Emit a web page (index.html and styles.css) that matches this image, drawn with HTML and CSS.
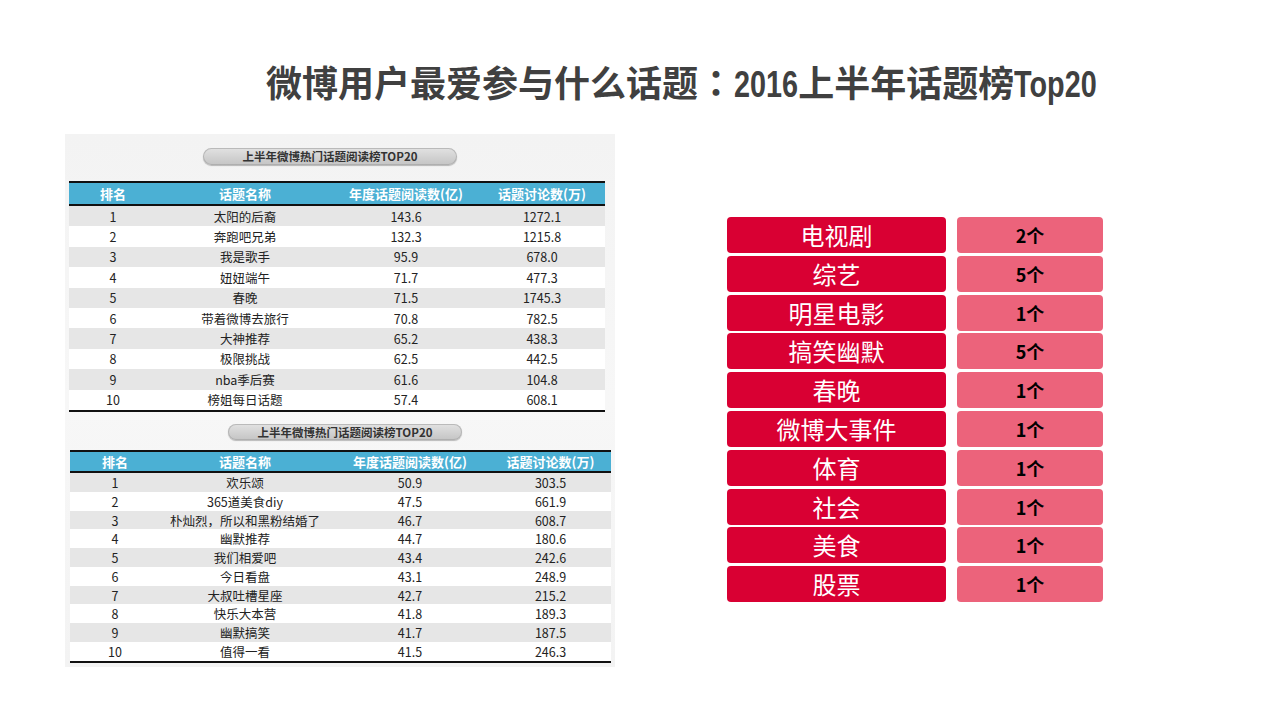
FILE: index.html
```html
<!DOCTYPE html>
<html lang="zh-CN">
<head>
<meta charset="utf-8">
<title>微博用户最爱参与什么话题</title>
<link rel="stylesheet" href="styles.css">
</head>
<body>
<h1 class="title">微博用户最爱参与什么话题<span class="colon" lang="zh-TW">：</span><span class="lat year">2016</span>上半年话题榜<span class="lat top">Top20</span></h1>
<main class="content">
  <section class="panel">
    <div class="block block-a">
      <div class="pill">上半年微博热门话题阅读榜TOP20</div>
      <div class="grid">
        <div class="row head"><span>排名</span><span>话题名称</span><span>年度话题阅读数(亿)</span><span>话题讨论数(万)</span></div>
        <div class="row"><span>1</span><span>太阳的后裔</span><span>143.6</span><span>1272.1</span></div>
        <div class="row"><span>2</span><span>奔跑吧兄弟</span><span>132.3</span><span>1215.8</span></div>
        <div class="row"><span>3</span><span>我是歌手</span><span>95.9</span><span>678.0</span></div>
        <div class="row"><span>4</span><span>妞妞端午</span><span>71.7</span><span>477.3</span></div>
        <div class="row"><span>5</span><span>春晚</span><span>71.5</span><span>1745.3</span></div>
        <div class="row"><span>6</span><span>带着微博去旅行</span><span>70.8</span><span>782.5</span></div>
        <div class="row"><span>7</span><span>大神推荐</span><span>65.2</span><span>438.3</span></div>
        <div class="row"><span>8</span><span>极限挑战</span><span>62.5</span><span>442.5</span></div>
        <div class="row"><span>9</span><span>nba季后赛</span><span>61.6</span><span>104.8</span></div>
        <div class="row last"><span>10</span><span>榜姐每日话题</span><span>57.4</span><span>608.1</span></div>
      </div>
    </div>
    <div class="block block-b">
      <div class="pill">上半年微博热门话题阅读榜TOP20</div>
      <div class="grid">
        <div class="row head"><span>排名</span><span>话题名称</span><span>年度话题阅读数(亿)</span><span>话题讨论数(万)</span></div>
        <div class="row"><span>1</span><span>欢乐颂</span><span>50.9</span><span>303.5</span></div>
        <div class="row"><span>2</span><span>365道美食diy</span><span>47.5</span><span>661.9</span></div>
        <div class="row"><span>3</span><span>朴灿烈，所以和黑粉结婚了</span><span>46.7</span><span>608.7</span></div>
        <div class="row"><span>4</span><span>幽默推荐</span><span>44.7</span><span>180.6</span></div>
        <div class="row"><span>5</span><span>我们相爱吧</span><span>43.4</span><span>242.6</span></div>
        <div class="row"><span>6</span><span>今日看盘</span><span>43.1</span><span>248.9</span></div>
        <div class="row"><span>7</span><span>大叔吐槽星座</span><span>42.7</span><span>215.2</span></div>
        <div class="row"><span>8</span><span>快乐大本营</span><span>41.8</span><span>189.3</span></div>
        <div class="row"><span>9</span><span>幽默搞笑</span><span>41.7</span><span>187.5</span></div>
        <div class="row last"><span>10</span><span>值得一看</span><span>41.5</span><span>246.3</span></div>
      </div>
    </div>
  </section>
  <section class="cats">
    <div class="cat">电视剧</div><div class="num">2个</div>
    <div class="cat">综艺</div><div class="num">5个</div>
    <div class="cat">明星电影</div><div class="num">1个</div>
    <div class="cat">搞笑幽默</div><div class="num">5个</div>
    <div class="cat">春晚</div><div class="num">1个</div>
    <div class="cat">微博大事件</div><div class="num">1个</div>
    <div class="cat">体育</div><div class="num">1个</div>
    <div class="cat">社会</div><div class="num">1个</div>
    <div class="cat">美食</div><div class="num">1个</div>
    <div class="cat">股票</div><div class="num">1个</div>
  </section>
</main>
</body>
</html>
```
FILE: styles.css
```css
html, body {
  margin: 0;
  padding: 0;
  background: #ffffff;
}
body {
  width: 1280px;
  height: 720px;
  overflow: hidden;
  font-family: "Noto Sans CJK SC", "Noto Sans", sans-serif;
  color: #222;
}
.title {
  margin: 0;
  padding: 59px 0 0 266px;
  height: 44px;
  line-height: 44px;
  font-size: 36px;
  font-weight: 700;
  color: #404040;
  white-space: nowrap;
}
.title .colon {
  font-family: "Noto Sans CJK TC", "Noto Sans CJK SC", sans-serif;
}
.title .lat {
  display: inline-block;
  font-family: "Liberation Sans", sans-serif;
  font-weight: 700;
  transform: scaleX(0.8);
  transform-origin: left center;
}
.title .year { margin-right: -16px; }
.title .top { margin-right: -21px; }
.content {
  display: flex;
  align-items: flex-start;
}
.panel {
  margin: 31px 0 0 65px;
  width: 550px;
  height: 533px;
  background: linear-gradient(180deg, #f3f3f3 0%, #f7f7f7 50%, #f3f3f3 100%);
  box-sizing: border-box;
  padding-top: 14px;
}
.pill {
  height: 17px;
  line-height: 17px;
  border-radius: 9px;
  background: linear-gradient(180deg, #e2e2e2 0%, #d0d0d0 60%, #c4c4c4 100%);
  box-shadow: 0 1px 1px rgba(0,0,0,0.25), inset 0 0 0 1px rgba(160,160,160,0.6);
  text-align: center;
  font-size: 11.5px;
  font-weight: 700;
  color: #333;
}
.block-a .pill { margin-left: 138px; width: 254px; }
.block-b .pill { margin-left: 163px; width: 234px; height: 16px; line-height: 16px; }
.grid {
  border-top: 2px solid #111;
  border-bottom: 2px solid #111;
  font-size: 12.5px;
}
.block-a .grid { margin: 16px 0 0 4px; width: 536px; }
.block-b { margin-top: 12px; }
.block-b .grid { margin: 10px 0 0 5px; width: 541px; }
.row {
  display: grid;
  align-items: center;
  text-align: center;
  white-space: nowrap;
}
.block-a .row { grid-template-columns: 88px 176px 146px 126px; height: 20.4px; }
.block-b .row { grid-template-columns: 90px 170px 160px 121px; height: 18.8px; }
.row:nth-child(even) { background: #e6e6e6; }
.row:nth-child(odd) { background: #ffffff; }
.row.head {
  background: #4bb0d4;
  color: #ffffff;
  font-weight: 700;
  font-size: 13px;
  border-bottom: 2px solid #111;
}
.block-a .row.head { height: 21px; }
.block-b .row.head { height: 19px; }
.cats {
  margin: 114px 0 0 112px;
  display: grid;
  grid-template-columns: 219px 146px;
  grid-auto-rows: 36px;
  column-gap: 11px;
  row-gap: 2.8px;
}
.cat {
  background: #d90033;
  border-radius: 4px;
  color: #ffffff;
  font-size: 24px;
  line-height: 36px;
  text-align: center;
}
.num {
  background: #ec637b;
  border-radius: 4px;
  color: #000000;
  font-size: 18px;
  font-weight: 700;
  line-height: 36px;
  text-align: center;
}
```
